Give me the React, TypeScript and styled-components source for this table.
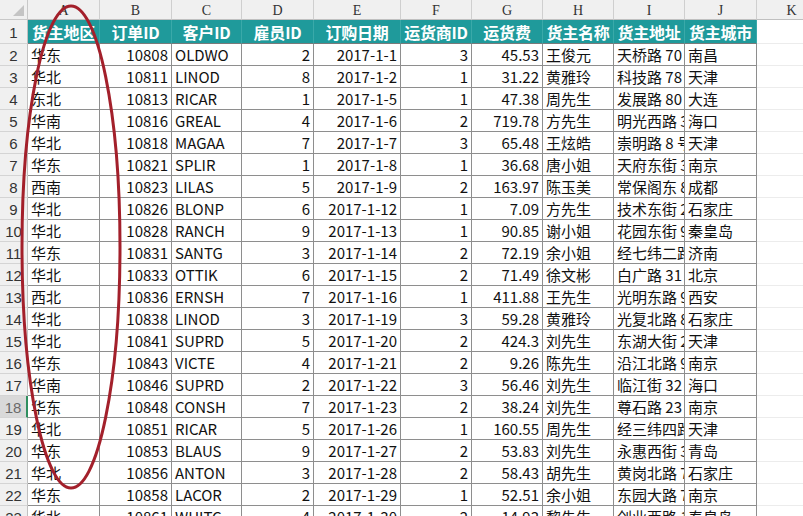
import React from "react";
import styled, { createGlobalStyle, css } from "styled-components";

const Global = createGlobalStyle`
  html, body { margin: 0; padding: 0; background: #ffffff; overflow: hidden; }
  body { width: 803px; height: 516px; }
`;

const COLS = [28, 72, 72, 70, 72, 87, 71, 71, 71, 71, 72, 70];
const LETTERS = ["A", "B", "C", "D", "E", "F", "G", "H", "I", "J", "K"];

const Sheet = styled.div`
  position: relative;
  width: 803px;
  height: 516px;
  overflow: hidden;
  font-family: "Noto Sans CJK SC", "Noto Sans", sans-serif;
`;

const Grid = styled.div`
  display: grid;
  grid-template-columns: ${COLS.map((c) => c + "px").join(" ")};
  grid-template-rows: 20px 24px repeat(22, 22px);
  width: max-content;
`;

const Corner = styled.div`
  box-sizing: border-box;
  background: #f0f0f0;
  border-right: 1px solid #c8c8c8;
  border-bottom: 1px solid #c8c8c8;
  position: relative;
  &::after {
    content: "";
    position: absolute;
    right: 3px;
    bottom: 3px;
    width: 0;
    height: 0;
    border-left: 11px solid transparent;
    border-bottom: 11px solid #c4c4c4;
  }
`;

const ColHeader = styled.div`
  box-sizing: border-box;
  background: #f0f0f0;
  border-right: 1px solid #cfcfcf;
  border-bottom: 1px solid #c0c0c0;
  font-family: "Liberation Serif", "DejaVu Serif", serif;
  font-size: 14px;
  color: #333;
  display: flex;
  align-items: flex-end;
  justify-content: center;
  padding-bottom: 1px;
  line-height: 1;
`;

const RowHeader = styled.div<{ $active?: boolean }>`
  box-sizing: border-box;
  background: ${(p) => (p.$active ? "#d9d9d9" : "#f0f0f0")};
  border-right: ${(p) => (p.$active ? "2px solid #2f8f5f" : "1px solid #c0c0c0")};
  border-bottom: 1px solid #d4d4d4;
  font-family: "Liberation Sans", "DejaVu Sans", sans-serif;
  font-size: 15px;
  color: ${(p) => (p.$active ? "#6a6a6a" : "#333")};
  display: flex;
  align-items: center;
  justify-content: center;
  padding-top: 2px;
`;

const HeadCell = styled.div`
  box-sizing: border-box;
  background: #1f9a9b;
  border-right: 1px solid #3aa9a9;
  border-bottom: 1px solid #7a7a7a;
  color: #ffffff;
  font-weight: 700;
  font-size: 16px;
  display: flex;
  align-items: center;
  justify-content: center;
  white-space: nowrap;
  overflow: hidden;
  letter-spacing: -0.2px;
`;

const DataCell = styled.div<{ $right?: boolean }>`
  box-sizing: border-box;
  border-right: 1px solid #8e8e8e;
  border-bottom: 1px solid #8e8e8e;
  font-size: 15px;
  color: #111;
  display: flex;
  align-items: center;
  padding: 0 3px;
  white-space: nowrap;
  overflow: hidden;
  ${(p) =>
    p.$right
      ? css`
          justify-content: flex-end;
        `
      : css`
          justify-content: flex-start;
        `}
`;

const EmptyCell = styled.div`
  box-sizing: border-box;
  border-right: 1px solid #ececec;
  border-bottom: 1px solid #ececec;
`;

const Oval = styled.svg`
  position: absolute;
  left: 0;
  top: 0;
  pointer-events: none;
`;

const HEAD = ["货主地区", "订单ID", "客户ID", "雇员ID", "订购日期", "运货商ID", "运货费", "货主名称", "货主地址", "货主城市"];
const RIGHT = [false, true, false, true, true, true, true, false, false, false];

const ROWS: string[][] = [
  ["华东", "10808", "OLDWO", "2", "2017-1-1", "3", "45.53", "王俊元", "天桥路 70 号", "南昌"],
  ["华北", "10811", "LINOD", "8", "2017-1-2", "1", "31.22", "黄雅玲", "科技路 78 号", "天津"],
  ["东北", "10813", "RICAR", "1", "2017-1-5", "1", "47.38", "周先生", "发展路 80 号", "大连"],
  ["华南", "10816", "GREAL", "4", "2017-1-6", "2", "719.78", "方先生", "明光西路 3 号", "海口"],
  ["华北", "10818", "MAGAA", "7", "2017-1-7", "3", "65.48", "王炫皓", "崇明路 8 号", "天津"],
  ["华东", "10821", "SPLIR", "1", "2017-1-8", "1", "36.68", "唐小姐", "天府东街 3 号", "南京"],
  ["西南", "10823", "LILAS", "5", "2017-1-9", "2", "163.97", "陈玉美", "常保阁东 8 号", "成都"],
  ["华北", "10826", "BLONP", "6", "2017-1-12", "1", "7.09", "方先生", "技术东街 2 号", "石家庄"],
  ["华北", "10828", "RANCH", "9", "2017-1-13", "1", "90.85", "谢小姐", "花园东街 9 号", "秦皇岛"],
  ["华东", "10831", "SANTG", "3", "2017-1-14", "2", "72.19", "余小姐", "经七纬二路 3 号", "济南"],
  ["华北", "10833", "OTTIK", "6", "2017-1-15", "2", "71.49", "徐文彬", "白广路 31 号", "北京"],
  ["西北", "10836", "ERNSH", "7", "2017-1-16", "1", "411.88", "王先生", "光明东路 9 号", "西安"],
  ["华北", "10838", "LINOD", "3", "2017-1-19", "3", "59.28", "黄雅玲", "光复北路 8 号", "石家庄"],
  ["华北", "10841", "SUPRD", "5", "2017-1-20", "2", "424.3", "刘先生", "东湖大街 2 号", "天津"],
  ["华东", "10843", "VICTE", "4", "2017-1-21", "2", "9.26", "陈先生", "沿江北路 9 号", "南京"],
  ["华南", "10846", "SUPRD", "2", "2017-1-22", "3", "56.46", "刘先生", "临江街 32 号", "海口"],
  ["华东", "10848", "CONSH", "7", "2017-1-23", "2", "38.24", "刘先生", "尊石路 23 号", "南京"],
  ["华北", "10851", "RICAR", "5", "2017-1-26", "1", "160.55", "周先生", "经三纬四路 4 号", "天津"],
  ["华东", "10853", "BLAUS", "9", "2017-1-27", "2", "53.83", "刘先生", "永惠西街 3 号", "青岛"],
  ["华北", "10856", "ANTON", "3", "2017-1-28", "2", "58.43", "胡先生", "黄岗北路 7 号", "石家庄"],
  ["华东", "10858", "LACOR", "2", "2017-1-29", "1", "52.51", "余小姐", "东园大路 7 号", "南京"],
  ["华北", "10861", "WHITC", "4", "2017-1-30", "2", "14.93", "黎先生", "创业西路 1 号", "秦皇岛"],
];

export default function App() {
  return (
    <>
      <Global />
      <Sheet>
        <Grid>
          <Corner />
          {LETTERS.map((l) => (
            <ColHeader key={l}>{l}</ColHeader>
          ))}

          <RowHeader>1</RowHeader>
          {HEAD.map((h) => (
            <HeadCell key={h}>{h}</HeadCell>
          ))}
          <EmptyCell />

          {ROWS.map((r, i) => {
            const n = i + 2;
            return (
              <React.Fragment key={n}>
                <RowHeader $active={n === 18}>{n}</RowHeader>
                {r.map((v, j) => (
                  <DataCell key={j} $right={RIGHT[j]}>
                    {v}
                  </DataCell>
                ))}
                <EmptyCell />
              </React.Fragment>
            );
          })}
        </Grid>
        <Oval width="803" height="516" viewBox="0 0 803 516">
          <ellipse cx="71" cy="247" rx="49" ry="241" fill="none" stroke="#a3202b" strokeWidth="3" />
        </Oval>
      </Sheet>
    </>
  );
}
